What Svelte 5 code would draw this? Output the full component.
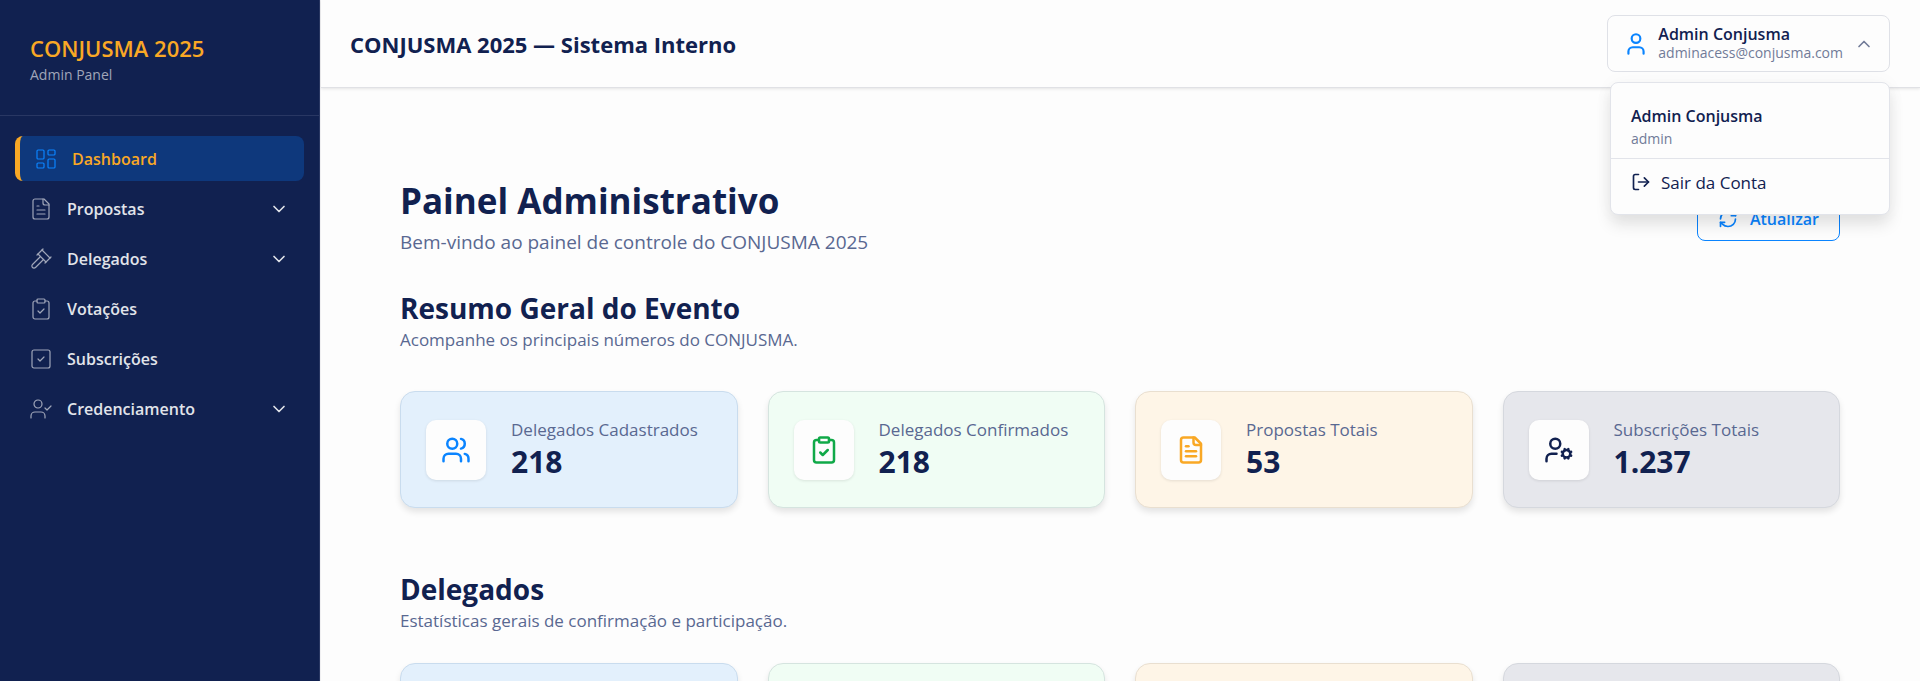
<script lang="ts">
  type IconName =
    | 'dashboard' | 'file' | 'gavel' | 'clipboard' | 'square' | 'userCheck'
    | 'user' | 'users' | 'userCog' | 'logout' | 'refresh' | 'down' | 'up';

  type NavItem = { label: string; icon: IconName; expandable?: boolean };
  type Stat = { label: string; value: string; icon: IconName; tone: string };
  type Section = { title: string; text: string; stats: Stat[] };

  const nav: NavItem[] = [
    { label: 'Dashboard', icon: 'dashboard' },
    { label: 'Propostas', icon: 'file', expandable: true },
    { label: 'Delegados', icon: 'gavel', expandable: true },
    { label: 'Votações', icon: 'clipboard' },
    { label: 'Subscrições', icon: 'square' },
    { label: 'Credenciamento', icon: 'userCheck', expandable: true },
  ];

  const sections: Section[] = [
    {
      title: 'Resumo Geral do Evento',
      text: 'Acompanhe os principais números do CONJUSMA.',
      stats: [
        { label: 'Delegados Cadastrados', value: '218', icon: 'users', tone: 'blue' },
        { label: 'Delegados Confirmados', value: '218', icon: 'clipboard', tone: 'green' },
        { label: 'Propostas Totais', value: '53', icon: 'file', tone: 'amber' },
        { label: 'Subscrições Totais', value: '1.237', icon: 'userCog', tone: 'navy' },
      ],
    },
    {
      title: 'Delegados',
      text: 'Estatísticas gerais de confirmação e participação.',
      stats: [
        { label: '', value: '', icon: 'users', tone: 'blue' },
        { label: '', value: '', icon: 'clipboard', tone: 'green' },
        { label: '', value: '', icon: 'file', tone: 'amber' },
        { label: '', value: '', icon: 'userCog', tone: 'navy' },
      ],
    },
  ];

  let active = $state('Dashboard');
  let menuOpen = $state(true);
</script>

{#snippet icon(name: IconName, size: number, stroke: number)}
  <svg width={size} height={size} viewBox="0 0 24 24" fill="none" stroke="currentColor" stroke-width={stroke} stroke-linecap="round" stroke-linejoin="round" aria-hidden="true">
    {#if name === 'dashboard'}
      <rect x="3" y="3" width="7" height="9" rx="1"/><rect x="14" y="3" width="7" height="5" rx="1"/><rect x="14" y="12" width="7" height="9" rx="1"/><rect x="3" y="16" width="7" height="5" rx="1"/>
    {:else if name === 'file'}
      <path d="M15 2H6a2 2 0 0 0-2 2v16a2 2 0 0 0 2 2h12a2 2 0 0 0 2-2V7Z"/><path d="M14 2v4a2 2 0 0 0 2 2h4"/><path d="M10 9H8"/><path d="M16 13H8"/><path d="M16 17H8"/>
    {:else if name === 'gavel'}
      <path d="m14.500 12.500-8 8a2.119 2.119 0 1 1-3-3l8-8"/><path d="m16 16 6-6"/><path d="m8 8 6-6"/><path d="m9 7 8 8"/><path d="m21 11-8-8"/>
    {:else if name === 'clipboard'}
      <rect x="8" y="2" width="8" height="4" rx="1"/><path d="M16 4h2a2 2 0 0 1 2 2v14a2 2 0 0 1-2 2H6a2 2 0 0 1-2-2V6a2 2 0 0 1 2-2h2"/><path d="m9 14 2 2 4-4"/>
    {:else if name === 'square'}
      <rect x="3" y="3" width="18" height="18" rx="2"/><path d="m9 12 2 2 4-4"/>
    {:else if name === 'userCheck'}
      <path d="m16 11 2 2 4-4"/><path d="M16 21v-2a4 4 0 0 0-4-4H6a4 4 0 0 0-4 4v2"/><circle cx="9" cy="7" r="4"/>
    {:else if name === 'user'}
      <path d="M19 21v-2a4 4 0 0 0-4-4H9a4 4 0 0 0-4 4v2"/><circle cx="12" cy="7" r="4"/>
    {:else if name === 'users'}
      <path d="M16 21v-2a4 4 0 0 0-4-4H6a4 4 0 0 0-4 4v2"/><circle cx="9" cy="7" r="4"/><path d="M22 21v-2a4 4 0 0 0-3-3.870"/><path d="M16 3.130a4 4 0 0 1 0 7.750"/>
    {:else if name === 'userCog'}
      <path d="M10 15H6a4 4 0 0 0-4 4v2"/><circle cx="9" cy="7" r="4"/><circle cx="18" cy="15" r="3"/><path d="m14.300 16.500.9-.3M20.800 13.800l.9-.3M16.800 12.200l-.3-.9M19.500 18.700l-.3-.9M16.500 18.700l.3-.9M19.200 12.200l.3-.9M21.700 16.500l-.9-.3M15.200 13.800l-.9-.3"/>
    {:else if name === 'logout'}
      <path d="M9 21H5a2 2 0 0 1-2-2V5a2 2 0 0 1 2-2h4"/><path d="m16 17 5-5-5-5"/><path d="M21 12H9"/>
    {:else if name === 'refresh'}
      <path d="M3 12a9 9 0 0 1 9-9 9.750 9.750 0 0 1 6.740 2.740L21 8"/><path d="M21 3v5h-5"/><path d="M21 12a9 9 0 0 1-9 9 9.750 9.750 0 0 1-6.740-2.740L3 16"/><path d="M8 16H3v5"/>
    {:else if name === 'down'}
      <path d="m6 9 6 6 6-6"/>
    {:else}
      <path d="m18 15-6-6-6 6"/>
    {/if}
  </svg>
{/snippet}

<div class="app">
  <aside class="sidebar">
    <div class="brand">
      <strong class="brand-name">CONJUSMA 2025</strong>
      <span class="brand-sub">Admin Panel</span>
    </div>
    <nav class="nav">
      {#each nav as item (item.label)}
        <button type="button" class="nav-item" class:on={active === item.label} onclick={() => (active = item.label)}>
          <span class="nav-icon">{@render icon(item.icon, 24, 1.2)}</span>
          <span class="nav-label">{item.label}</span>
          {#if item.expandable}
            {@render icon('down', 20, 2)}
          {/if}
        </button>
      {/each}
    </nav>
  </aside>

  <div class="page">
    <header class="topbar">
      <h2 class="topbar-title">CONJUSMA 2025 — Sistema Interno</h2>
      <div class="account">
        <button type="button" class="account-btn" aria-expanded={menuOpen} onclick={() => (menuOpen = !menuOpen)}>
          <span class="account-icon">{@render icon('user', 26, 2)}</span>
          <span class="account-text">
            <span class="account-name">Admin Conjusma</span>
            <span class="account-mail">adminacess@conjusma.com</span>
          </span>
          {@render icon(menuOpen ? 'up' : 'down', 20, 2)}
        </button>
        {#if menuOpen}
          <div class="menu">
            <div class="menu-head">
              <span class="menu-name">Admin Conjusma</span>
              <span class="menu-role">admin</span>
            </div>
            <button type="button" class="menu-item">
              {@render icon('logout', 20, 2)}
              Sair da Conta
            </button>
          </div>
        {/if}
      </div>
    </header>

    <main class="content">
      <div class="page-head">
        <div>
          <h1>Painel Administrativo</h1>
          <p class="lead">Bem-vindo ao painel de controle do CONJUSMA 2025</p>
        </div>
        <button type="button" class="refresh">
          {@render icon('refresh', 20, 2)}
          Atualizar
        </button>
      </div>

      {#each sections as section (section.title)}
        <section>
          <h2>{section.title}</h2>
          <p class="section-text">{section.text}</p>
          <div class="cards">
            {#each section.stats as stat}
              <article class="card {stat.tone}">
                <div class="card-icon">{@render icon(stat.icon, 30, 2)}</div>
                <div class="card-body">
                  <span class="card-label">{stat.label}</span>
                  <strong class="card-value">{stat.value}</strong>
                </div>
              </article>
            {/each}
          </div>
        </section>
      {/each}
    </main>
  </div>
</div>

<style>
  :global(body) {
    overflow: hidden;
    background: #fdfdfd;
  }
  .app {
    display: flex;
    height: 100vh;
    overflow: hidden;
    font-family: 'Open Sans', 'Noto Sans', sans-serif;
    font-size: 16px;
    color: #112150;
  }
  h1, h2, p {
    margin: 0;
  }
  button {
    font: inherit;
    color: inherit;
    cursor: pointer;
  }
  svg {
    flex-shrink: 0;
    display: block;
  }

  .sidebar {
    box-sizing: border-box;
    width: 320px;
    flex-shrink: 0;
    border-right: 1px solid #293763;
    background: #112150;
    color: #e1e4ea;
  }
  .brand {
    display: flex;
    flex-direction: column;
    padding: 32px 30px 29px;
    border-bottom: 1px solid #293763;
  }
  .brand-name {
    font-size: 22px;
    line-height: 32px;
    font-weight: 600;
    color: #f9a825;
  }
  .brand-sub {
    font-size: 14px;
    line-height: 22px;
    color: #a0a6b9;
  }
  .nav {
    display: flex;
    flex-direction: column;
    gap: 5px;
    padding: 20px 15px;
  }
  .nav-item {
    display: flex;
    align-items: center;
    gap: 14px;
    height: 45px;
    padding: 0 15px 0 14px;
    border: 0;
    border-radius: 8px;
    background: transparent;
    text-align: left;
    font-weight: 600;
  }
  .nav-icon {
    color: #a0a6b9;
  }
  .nav-label {
    flex: 1;
  }
  .nav-item.on {
    border-left: 5px solid #f9a825;
    background: #0e387c;
    color: #f9a825;
  }
  .nav-item.on .nav-icon {
    color: #0a84ff;
  }

  .page {
    flex: 1;
    min-width: 0;
    border-left: 1px solid #f0f0f2;
  }
  .topbar {
    position: relative;
    z-index: 2;
    display: flex;
    align-items: center;
    justify-content: space-between;
    padding: 15px 30px 15px 29px;
    border-bottom: 1px solid #e0e1e5;
    background: #fdfdfd;
    box-shadow: 0 1px 3px rgba(0, 0, 0, 0.1);
  }
  .topbar-title {
    font-size: 22px;
    line-height: 32px;
    font-weight: 700;
  }
  .account {
    position: relative;
  }
  .account-btn {
    display: flex;
    align-items: center;
    gap: 9px;
    height: 57px;
    padding: 0 15px;
    border: 1px solid #dfe1e7;
    border-radius: 8px;
    background: #fdfdfd;
    color: #717b98;
    text-align: left;
  }
  .account-icon {
    color: #0a84ff;
  }
  .account-text {
    display: flex;
    flex-direction: column;
    margin-right: 2px;
    padding-bottom: 2px;
  }
  .account-name {
    font-weight: 600;
    line-height: 20px;
    color: #112150;
  }
  .account-mail {
    font-size: 14px;
    line-height: 18px;
    color: #717b98;
  }
  .menu {
    position: absolute;
    top: calc(100% + 10px);
    right: 0;
    width: 280px;
    box-sizing: border-box;
    border: 1px solid #e2e4ea;
    border-radius: 8px;
    background: #fdfdfd;
    box-shadow: 0 10px 15px rgba(0, 0, 0, 0.1), 0 0 20px rgba(0, 0, 0, 0.03);
  }
  .menu-head {
    display: flex;
    flex-direction: column;
    padding: 21px 20px 9px;
    border-bottom: 1px solid #e2e4ea;
  }
  .menu-name {
    font-weight: 600;
    line-height: 24px;
  }
  .menu-role {
    font-size: 14px;
    line-height: 21px;
    color: #717b98;
  }
  .menu-item {
    display: flex;
    align-items: center;
    gap: 10px;
    width: 100%;
    height: 46px;
    margin-bottom: 9px;
    padding: 0 20px;
    border: 0;
    background: transparent;
    font-size: 17px;
  }

  .content {
    padding: 90px 80px 0 79px;
  }
  .page-head {
    display: flex;
    align-items: center;
    justify-content: space-between;
    margin-bottom: 35px;
  }
  h1 {
    font-size: 35px;
    line-height: 46px;
    font-weight: 700;
  }
  .lead {
    margin-top: 5px;
    font-size: 19px;
    line-height: 26px;
    color: #596891;
  }
  .refresh {
    display: flex;
    align-items: center;
    gap: 12px;
    height: 44px;
    margin-top: 4px;
    padding: 0 20px;
    border: 1px solid #0a84ff;
    border-radius: 8px;
    background: transparent;
    color: #0a84ff;
    font-weight: 600;
  }
  section {
    margin-bottom: 63px;
  }
  section h2 {
    font-size: 28px;
    line-height: 36px;
    font-weight: 700;
  }
  .section-text {
    margin: 2px 0 39px;
    font-size: 17px;
    line-height: 24px;
    color: #596891;
  }
  section:last-child .section-text {
    margin-bottom: 30px;
  }
  .cards {
    display: grid;
    grid-template-columns: repeat(4, 1fr);
    gap: 30px;
  }
  .card {
    display: flex;
    align-items: center;
    gap: 25px;
    min-height: 65px;
    padding: 25px;
    border: 1px solid #d9dde3;
    border-radius: 15px;
    box-shadow: 0 4px 6px rgba(0, 0, 0, 0.1);
  }
  .card-icon {
    display: grid;
    place-items: center;
    flex-shrink: 0;
    width: 60px;
    height: 60px;
    border-radius: 10px;
    background: #fdfdfd;
    box-shadow: 0 1px 3px rgba(0, 0, 0, 0.1);
  }
  .card-body {
    display: flex;
    flex-direction: column;
  }
  .card-label {
    font-size: 17px;
    line-height: 24px;
    font-weight: 500;
    white-space: nowrap;
    color: #596891;
  }
  .card-value {
    font-size: 30px;
    line-height: 40px;
    color: #112150;
  }
  .blue {
    background: #e3f0fc;
    border-color: #c9dcee;
    color: #0a84ff;
  }
  .green {
    background: #f0fdf4;
    border-color: #d5e4df;
    color: #10a948;
  }
  .amber {
    background: #fef5e7;
    border-color: #e9dfd0;
    color: #f9a825;
  }
  .navy {
    background: #e6e7ec;
    border-color: #d5d8de;
    color: #112150;
  }
</style>
